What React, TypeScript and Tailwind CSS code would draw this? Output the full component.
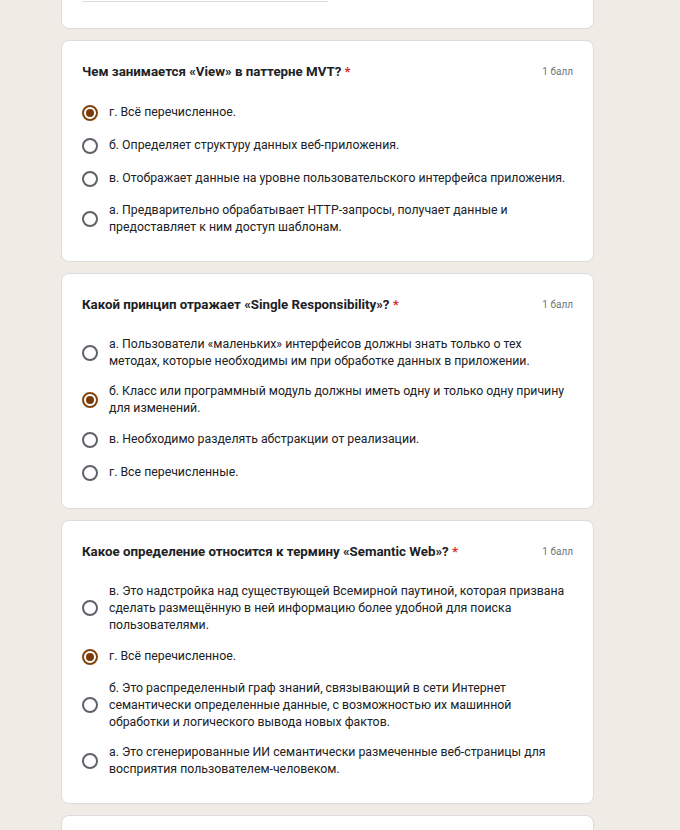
import React from "react";

type Q = { title: string; options: { text: string; checked?: boolean }[] };

const questions: Q[] = [
  {
    title: "Чем занимается «View» в паттерне MVT?",
    options: [
      { text: "г. Всё перечисленное.", checked: true },
      { text: "б. Определяет структуру данных веб-приложения." },
      { text: "в. Отображает данные на уровне пользовательского интерфейса приложения." },
      { text: "а. Предварительно обрабатывает HTTP-запросы, получает данные и предоставляет к ним доступ шаблонам." },
    ],
  },
  {
    title: "Какой принцип отражает «Single Responsibility»?",
    options: [
      { text: "а. Пользователи «маленьких» интерфейсов должны знать только о тех методах, которые необходимы им при обработке данных в приложении." },
      { text: "б. Класс или программный модуль должны иметь одну и только одну причину для изменений.", checked: true },
      { text: "в. Необходимо разделять абстракции от реализации." },
      { text: "г. Все перечисленные." },
    ],
  },
  {
    title: "Какое определение относится к термину «Semantic Web»?",
    options: [
      { text: "в. Это надстройка над существующей Всемирной паутиной, которая призвана сделать размещённую в ней информацию более удобной для поиска пользователями." },
      { text: "г. Всё перечисленное.", checked: true },
      { text: "б. Это распределенный граф знаний, связывающий в сети Интернет семантически определенные данные, с возможностью их машинной обработки и логического вывода новых фактов." },
      { text: "а. Это сгенерированные ИИ семантически размеченные веб-страницы для восприятия пользователем-человеком." },
    ],
  },
];

function Radio({ checked }: { checked?: boolean }) {
  return checked ? (
    <span className="flex h-[16px] w-[16px] shrink-0 items-center justify-center rounded-full border-2 border-[#83450f]">
      <span className="h-[8px] w-[8px] rounded-full bg-[#7a3a06]" />
    </span>
  ) : (
    <span className="h-[16px] w-[16px] shrink-0 rounded-full border-2 border-[#5f6368]" />
  );
}

function Card({ q }: { q: Q }) {
  return (
    <div className="rounded-lg border border-[#dadce0] bg-white pl-[20px] pr-[20px] pt-[22px] pb-[19px]">
      <div className="flex items-start justify-between">
        <div className="text-[13.3px] font-bold leading-[18px] text-[#202124]">
          {q.title} <span className="text-[#d93025]">*</span>
        </div>
        <div className="pt-[1px] text-[10px] leading-[16px] text-[#70757a]">1 балл</div>
      </div>
      <div className="mt-[15px] flex flex-col pr-[7px]">
        {q.options.map((o, i) => (
          <div key={i} className="flex min-h-[33px] items-center gap-[11px] py-[6.5px]">
            <Radio checked={o.checked} />
            <div className="text-[12.3px] leading-[17px] text-[#202124]">{o.text}</div>
          </div>
        ))}
      </div>
    </div>
  );
}

export default function App() {
  return (
    <div
      className="min-h-[830px] w-full bg-[#f1ebe6]"
      style={{ fontFamily: "Roboto, 'Liberation Sans', sans-serif" }}
    >
      <div className="ml-[61px] flex w-[533px] flex-col gap-[11px]">
        <div className="h-[29px] rounded-b-lg border border-t-0 border-[#dadce0] bg-white px-[20px]">
          <div className="mt-[1px] h-px w-[246px] bg-[#dadce0]" />
        </div>
        {questions.map((q, i) => (
          <Card key={i} q={q} />
        ))}
        <div className="h-[40px] rounded-t-lg border border-b-0 border-[#dadce0] bg-white" />
      </div>
    </div>
  );
}
